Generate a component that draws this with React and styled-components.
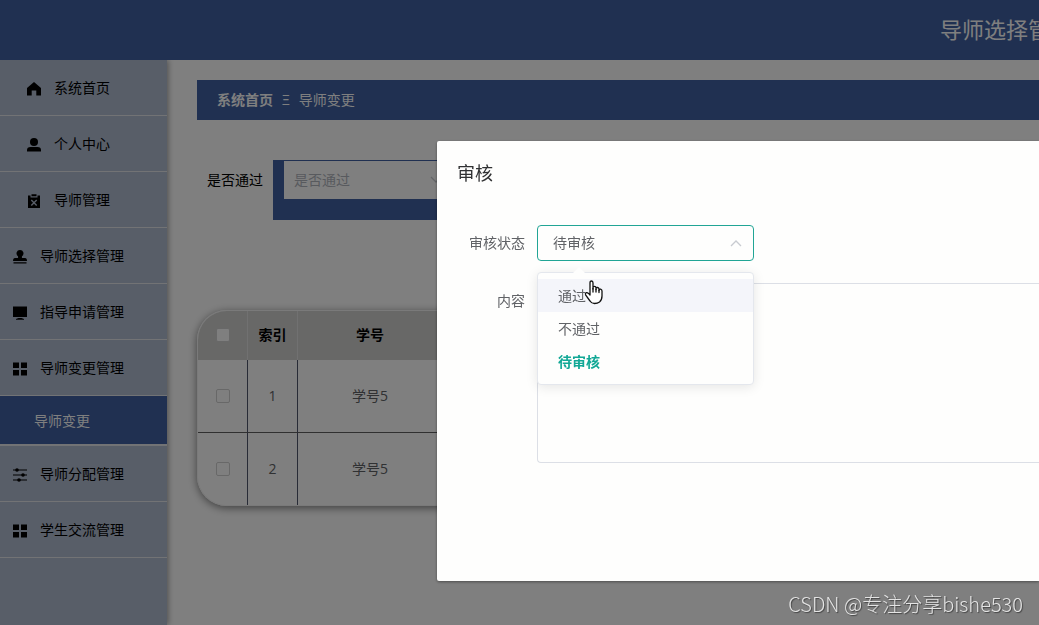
import React, {useState} from "react";
import styled, {createGlobalStyle, css} from "styled-components";

const GlobalStyle = createGlobalStyle`
  * {
    box-sizing: border-box;
  }
  body {
    margin: 0;
    overflow: hidden;
    background: #fff;
    color: #606266;
    font-family: "Open Sans", "Noto Sans CJK SC", sans-serif;
    font-size: 14px;
    line-height: 18px;
  }
  button, input, select, textarea {
    font: inherit;
    color: inherit;
  }
`;

const Header = styled.header`
  position: relative;
  display: flex;
  justify-content: flex-end;
  height: 60px;
  background: #4060a2;
`;

const SystemTitle = styled.h1`
  width: 99px;
  margin: 0;
  overflow: hidden;
  color: #fff;
  font-size: 22px;
  font-weight: 400;
  line-height: 58px;
  white-space: nowrap;
`;

const Layout = styled.div`
  display: flex;
  min-height: calc(100vh - 60px);
`;

const Sidebar = styled.nav`
  flex: none;
  width: 167px;
  background: #b0bcd0;
  box-shadow: 1px 0 6px rgba(0, 0, 0, 0.4);
`;

const MenuList = styled.ul`
  margin: 0;
  padding: 0;
  list-style: none;
`;

const MenuLink = styled.a`
  display: flex;
  align-items: center;
  gap: 12px;
  height: 56px;
  padding-left: ${(props) => (props.$top ? 26 : 12)}px;
  border-bottom: 1px solid #e4e6ea;
  color: #000;
  text-decoration: none;
`;

const SubMenuLink = styled.a`
  display: block;
  height: 50px;
  padding-left: 34px;
  border-bottom: 2px solid #e4e6ea;
  background: #4060a2;
  color: #fff;
  line-height: 50px;
  text-decoration: none;
`;

const MenuIcon = styled.svg`
  flex: none;
  width: 16px;
  height: 16px;
`;

const Main = styled.main`
  flex: 1;
  min-width: 0;
  padding: 20px 0 20px 30px;
`;

const Breadcrumb = styled.div`
  display: flex;
  align-items: center;
  gap: 9px;
  height: 40px;
  padding: 0 20px;
  background: #4060a2;
  color: #fff;
`;

const BreadcrumbLink = styled.a`
  color: #fff;
  font-weight: 700;
  text-decoration: none;
`;

const SearchForm = styled.form`
  display: flex;
  gap: 10px;
  margin: 40px 0 90px;
  padding-left: 10px;
`;

const SearchLabel = styled.label`
  color: #000;
  line-height: 40px;
`;

const SearchField = styled.div`
  height: 60px;
  padding: 1px 11px 0;
  background: #4060a2;
`;

const SelectBox = styled.div`
  position: relative;
  width: ${(props) => props.$width}px;
`;

const selectBase = css`
  display: block;
  width: 100%;
  margin: 0;
  appearance: none;
  outline: none;
`;

const SearchSelect = styled.select`
  ${selectBase}
  height: 38px;
  padding: 0 10px;
  border: 0;
  border-radius: 0;
  background: #fff;
  color: #b0b4bc;
`;

const StatusSelect = styled.select`
  ${selectBase}
  height: 36px;
  padding: 0 15px;
  border: 1px solid #21a595;
  border-radius: 4px;
  background: #fefefd;
`;

const Arrow = styled.svg`
  position: absolute;
  top: 50%;
  right: 12px;
  width: 12px;
  height: 12px;
  margin-top: -6px;
  pointer-events: none;
  transform: ${(props) => (props.$open ? "rotate(180deg)" : "none")};
`;

const TableContainer = styled.div`
  overflow: hidden;
  border: 1px solid #f4f4f4;
  border-right: 0;
  border-radius: 30px 0 0 30px;
  box-shadow: 0 2px 8px rgba(0, 0, 0, 0.5);
`;

const StyledTable = styled.table`
  width: 100%;
  border-collapse: separate;
  border-spacing: 0;
  table-layout: fixed;
  text-align: center;
`;

const HeaderCell = styled.th`
  width: ${(props) => props.$width || "auto"};
  height: 49px;
  padding: 0 0 2px;
  border-right: 1px solid #e2e2e2;
  background: #d0d0ce;
  color: #000;
`;

const TableCell = styled.td`
  height: 73px;
  padding: 0;
  border-right: 1px solid #50566c;
  border-bottom: 1px solid #606060;

  tr:last-child & {
    height: 72px;
    border-bottom: 0;
  }
`;

const Checkbox = styled.input`
  display: block;
  width: 14px;
  height: 14px;
  margin: 0 auto;
  border: 1px solid #d0d0d0;
  border-radius: 2px;
  background: #fff;
  appearance: none;
`;

const Mask = styled.div`
  position: fixed;
  inset: 0;
  padding: 141px 0 0 437px;
  background: rgba(0, 0, 0, 0.5);
`;

const Dialog = styled.section`
  min-height: 440px;
  border-radius: 2px 0 0 2px;
  background: #fefefd;
  box-shadow: 0 1px 3px rgba(0, 0, 0, 0.4);
`;

const DialogTitle = styled.h2`
  margin: 0;
  padding: 20px 20px 10px;
  color: #303133;
  font-size: 18px;
  font-weight: 400;
  line-height: 24px;
`;

const DialogForm = styled.form`
  display: flex;
  flex-direction: column;
  gap: 22px;
  padding: 30px 0 30px 20px;
`;

const FormRow = styled.div`
  display: flex;
`;

const FormLabel = styled.label`
  flex: none;
  width: 80px;
  padding-right: 12px;
  line-height: 36px;
  text-align: right;
`;

const ContentArea = styled.textarea`
  display: block;
  flex: 1;
  height: 180px;
  padding: 5px 15px;
  border: 1px solid #dcdfe6;
  border-right: 0;
  border-radius: 4px 0 0 4px;
  background: #fefefd;
  outline: none;
  resize: none;
`;

const Dropdown = styled.div`
  position: absolute;
  z-index: 2;
  top: 47px;
  left: 0;
  width: 100%;
  padding: 6px 0;
  border: 1px solid #e4e7ed;
  border-radius: 4px;
  background: #fefefd;
  box-shadow: 0 2px 12px rgba(0, 0, 0, 0.1);

  &::before {
    content: "";
    position: absolute;
    top: -6px;
    left: 35px;
    border: 6px solid transparent;
    border-top: 0;
    border-bottom-color: #fefefd;
  }
`;

const OptionButton = styled.button`
  display: block;
  width: 100%;
  height: 33px;
  padding: 0 20px;
  border: 0;
  background: ${(props) => (props.$hover ? "#f4f5fa" : "transparent")};
  color: ${(props) => (props.$selected ? "#12a896" : "#606266")};
  font-weight: ${(props) => (props.$selected ? 700 : 400)};
  line-height: 33px;
  text-align: left;
`;

const Pointer = styled.svg`
  position: absolute;
  top: 7px;
  left: 46px;
  width: 20px;
  height: 25px;
  pointer-events: none;
`;

const Watermark = styled.div`
  position: fixed;
  right: 16px;
  bottom: 6px;
  color: #e4e4e4;
  font-family: "Noto Sans CJK SC", sans-serif;
  font-size: 20px;
  font-weight: 300;
  line-height: 30px;
  text-shadow: 1px 1px 1px #444;
`;

const icons = {
  home: <path d="M8 1 L15 7 V14.5 H10.3 V9.5 H5.7 V14.5 H1 V7 Z" />,
  user: (
    <>
      <circle cx="8" cy="5" r="4" />
      <path d="M1 14.5 V13 Q1 10 4.5 10 H11.5 Q15 10 15 13 V14.5 Z" />
    </>
  ),
  release: (
    <>
      <path d="M2 2.5 H4.5 V4.5 H11.5 V2.5 H14 V15 H2 Z M5.5 1.3 H10.5 V3.3 H5.5 Z" />
      <path d="M5.3 7 L10.7 12.4 M10.7 7 L5.3 12.4" stroke="#b0bcd0" strokeWidth="1.4" />
    </>
  ),
  stamp: <path d="M8 1 A3.4 3.4 0 0 1 10 7.2 Q9.6 9 10.5 9 H13 Q15 9 15 12 H1 Q1 9 3 9 H5.5 Q6.4 9 6 7.2 A3.4 3.4 0 0 1 8 1 Z M1.5 13.2 H14.5 V14.5 H1.5 Z" />,
  platform: <path d="M1 1.5 H15 V12 H1 Z M6.5 13 H9.5 L12 14 V14.7 H4 V14 Z" />,
  menu: <path d="M1 1.5 H7 V7 H1 Z M9 1.5 H15 V7 H9 Z M1 9 H7 V14.5 H1 Z M9 9 H15 V14.5 H9 Z" />,
  operation: (
    <>
      <path d="M1 3 H15 M1 8 H15 M1 13 H15" stroke="#000" strokeWidth="1.1" />
      <circle cx="5" cy="3" r="1.8" />
      <circle cx="11" cy="8" r="1.8" />
      <circle cx="7" cy="13" r="1.8" />
    </>
  ),
};

const menus = [
  {name: "系统首页", icon: "home", top: true},
  {name: "个人中心", icon: "user", top: true},
  {name: "导师管理", icon: "release", top: true},
  {name: "导师选择管理", icon: "stamp"},
  {name: "指导申请管理", icon: "platform"},
  {name: "导师变更管理", icon: "menu", child: "导师变更"},
  {name: "导师分配管理", icon: "operation"},
  {name: "学生交流管理", icon: "menu"},
];

const rows = [
  {id: 1, number: "学号5"},
  {id: 2, number: "学号5"},
];

const options = ["通过", "不通过", "待审核"];

const SelectArrow = ({open}) => (
  <Arrow viewBox="0 0 12 12" $open={open} fill="none" stroke="#c8cbd0" strokeWidth="1.3">
    <path d="M1 3 L6 8 L11 3" />
  </Arrow>
);

const App = () => {
  const [status, setStatus] = useState("待审核");
  const [hovered, setHovered] = useState("通过");

  return (
    <>
      <GlobalStyle />
      <Header>
        <SystemTitle>导师选择管</SystemTitle>
      </Header>
      <Layout>
        <Sidebar>
          <MenuList>
            {menus.map((item) => (
              <li key={item.name}>
                <MenuLink href="#" $top={item.top}>
                  <MenuIcon viewBox="0 -1 16 16">{icons[item.icon]}</MenuIcon>
                  {item.name}
                </MenuLink>
                {item.child && <SubMenuLink href="#">{item.child}</SubMenuLink>}
              </li>
            ))}
          </MenuList>
        </Sidebar>
        <Main>
          <Breadcrumb>
            <BreadcrumbLink href="#">系统首页</BreadcrumbLink>
            <span>Ξ</span>
            <span>导师变更</span>
          </Breadcrumb>
          <SearchForm>
            <SearchLabel htmlFor="pass">是否通过</SearchLabel>
            <SearchField>
              <SelectBox $width={170}>
                <SearchSelect id="pass" defaultValue="">
                  <option value="">是否通过</option>
                </SearchSelect>
                <SelectArrow />
              </SelectBox>
            </SearchField>
          </SearchForm>
          <TableContainer>
            <StyledTable>
              <thead>
                <tr>
                  <HeaderCell $width="50px"><Checkbox type="checkbox" aria-label="全选" /></HeaderCell>
                  <HeaderCell $width="50px">索引</HeaderCell>
                  <HeaderCell $width="145px">学号</HeaderCell>
                  <HeaderCell />
                </tr>
              </thead>
              <tbody>
                {rows.map((row) => (
                  <tr key={row.id}>
                    <TableCell><Checkbox type="checkbox" aria-label={`选择${row.id}`} /></TableCell>
                    <TableCell>{row.id}</TableCell>
                    <TableCell>{row.number}</TableCell>
                    <TableCell />
                  </tr>
                ))}
              </tbody>
            </StyledTable>
          </TableContainer>
        </Main>
      </Layout>
      <Mask>
        <Dialog role="dialog" aria-labelledby="dialog-title">
          <DialogTitle id="dialog-title">审核</DialogTitle>
          <DialogForm>
            <FormRow>
              <FormLabel htmlFor="status">审核状态</FormLabel>
              <SelectBox $width={217}>
                <StatusSelect id="status" value={status} onChange={(e) => setStatus(e.target.value)}>
                  {options.map((item) => <option key={item}>{item}</option>)}
                </StatusSelect>
                <SelectArrow open />
                <Dropdown>
                  {options.map((item) => (
                    <OptionButton
                      key={item}
                      type="button"
                      $hover={hovered === item}
                      $selected={status === item}
                      onMouseEnter={() => setHovered(item)}
                      onClick={() => setStatus(item)}
                    >
                      {item}
                    </OptionButton>
                  ))}
                  <Pointer viewBox="0 0 20 25" fill="#fff" stroke="#111" strokeWidth="1.3" strokeLinejoin="round" strokeLinecap="round">
                    <path d="M6 15 V3 Q6 1 7.5 1 Q9 1 9 3 V9 V7.500 Q9 6.300 10.500 6.300 Q12 6.300 12 8 V9.500 V8.500 Q12.200 7.300 13.500 7.500 Q15 7.700 15 9.200 V10.500 V10 Q15.300 8.800 16.600 9.100 Q18 9.500 18 11 V16 Q18 20 15.500 22 Q13.500 23.500 10.500 23.500 Q7.500 23.500 6 21 L1.600 14.800 Q1 13.300 2.200 12.700 Q3.300 12.300 4.500 13.400 Z" />
                    <path d="M9 8.500 V12 M12 9.500 V12 M15 10.500 V12.500" fill="none" />
                  </Pointer>
                </Dropdown>
              </SelectBox>
            </FormRow>
            <FormRow>
              <FormLabel htmlFor="content">内容</FormLabel>
              <ContentArea id="content" />
            </FormRow>
          </DialogForm>
        </Dialog>
      </Mask>
      <Watermark>CSDN @专注分享bishe530</Watermark>
    </>
  );
};

export default App;
